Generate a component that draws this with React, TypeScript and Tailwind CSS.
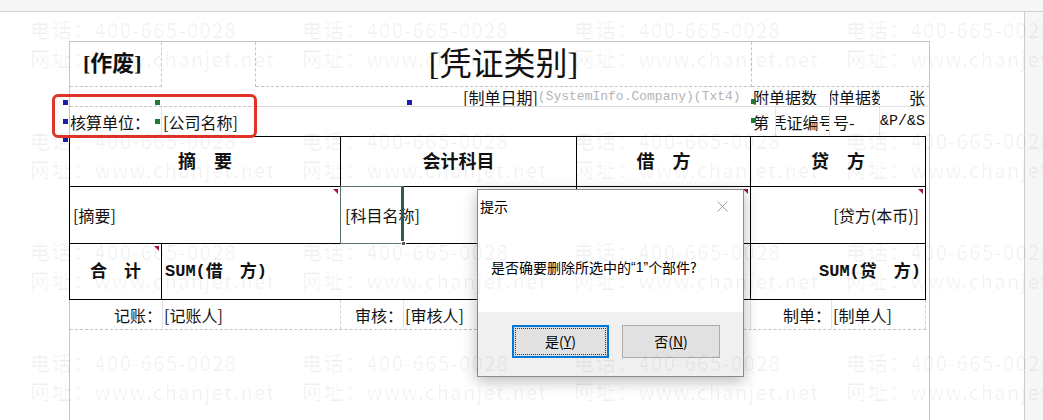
import React from "react";

const cjk = "font-['Noto_Sans_CJK_SC',sans-serif]";
const boldSerif = "font-['Liberation_Serif','Noto_Sans_CJK_SC',serif] font-bold";
const mono = "font-['Liberation_Mono','Noto_Sans_CJK_SC',monospace]";

// little red comment marker in a cell's top-right corner
const Marker = () => (
  <span className="absolute top-[2px] right-[2px] w-0 h-0 border-l-[5px] border-l-transparent border-t-[5px] border-t-[#a3144a]" />
);

const Handle = ({ className }: { className: string }) => (
  <span className={`absolute w-[5px] h-[5px] ${className}`} />
);

const Watermark = () => {
  const tiles = Array.from({ length: 16 });
  return (
    <div className="pointer-events-none absolute inset-0 pl-[30px] pt-[15px] grid grid-cols-[repeat(4,272px)] auto-rows-[111px]">
      {tiles.map((_, i) => (
        <div key={i} className={`${cjk} text-[20px] leading-[29px] tracking-[1.5px] text-black/[0.06] whitespace-nowrap`}>
          <div>电话：400-665-0028</div>
          <div>网址：www.chanjet.net</div>
        </div>
      ))}
    </div>
  );
};

const ConfirmDialog = () => (
  <div className={`absolute left-[477px] top-[189px] w-[267px] h-[188px] bg-white border border-[#8a8a8a] shadow-[0_4px_14px_rgba(0,0,0,0.28)] flex flex-col ${cjk} text-[14px] text-black`}>
    <div className="h-[32px] flex items-center justify-between pl-[2px] pr-[15px]">
      <span>提示</span>
      <svg width="11" height="11" viewBox="0 0 11 11" className="stroke-[#a0a0a0]" fill="none">
        <path d="M0.5 0.5l10 10M10.5 0.5l-10 10" strokeWidth="1" />
      </svg>
    </div>
    <div className="h-[90px] flex items-center pl-[13px]">
      是否确要删除所选中的<span className="font-['Liberation_Sans',sans-serif]">“1”</span>个部件?
    </div>
    <div className="flex-1 bg-[#f0f0f0] flex gap-[13px] pl-[34px] pt-[13px]">
      <button className="w-[97px] h-[33px] border-2 border-[#0078d7] bg-[#e1e1e1] p-[1px]">
        <span className="w-full h-full flex items-center justify-center border border-dotted border-[#333]">
          是(<span className="underline">Y</span>)
        </span>
      </button>
      <button className="w-[98px] h-[33px] border border-[#adadad] bg-[#e1e1e1] flex items-center justify-center">
        否(<span className="underline">N</span>)
      </button>
    </div>
  </div>
);

export default function App() {
  return (
    <div className={`relative w-[1043px] h-[420px] overflow-hidden bg-[#f6f6f6] ${cjk} text-[#111]`}>
      <div className="h-[12px] border-b border-[#d2d2d2]" />
      <div className="flex h-[408px]">
        <div className="w-[1025px] shrink-0 bg-white border-r border-[#cdcdcd] pt-[29px] pl-[69px]">
          <div className="relative w-[861px] h-full border-l border-t border-r border-[#c6c6c6] text-[16px] leading-none">
            {/* title band */}
            <div className="flex h-[45px]">
              <div className="w-[92px] border-r border-b border-dashed border-[#c4c4c4] flex items-center pl-[13px]">
                <span className={`${boldSerif} text-[22px]`}>[作废]</span>
              </div>
              <div className="w-[94px] border-r border-dashed border-[#c4c4c4]" />
              <div className="w-[496px] border-r border-b border-dashed border-[#c4c4c4] flex items-center justify-center">
                <span className="font-['Liberation_Serif','Noto_Sans_CJK_SC',serif] text-[32px]">[凭证类别]</span>
              </div>
              <div className="flex-1 border-b border-dashed border-[#c4c4c4]" />
            </div>

            {/* date / attachments */}
            <div className="flex h-[20px]">
              <div className="w-[186px] border-b border-dashed border-[#c4c4c4]" />
              <div className="w-[496px] border-b border-[#d8d8d8] flex items-center pl-[207px] overflow-hidden whitespace-nowrap relative">
                <span>[制单日期]</span>
                <span className={`${mono} text-[13px] text-[#b4b4b4]`}>(SystemInfo.Company)(Txt4)</span>
              </div>
              <div className="flex-1 flex items-center border-b border-[#e4e4e4]">
                <div className="w-[78px] pl-[1px] whitespace-nowrap overflow-hidden">附单据数</div>
                <div className="w-[50px] flex justify-center overflow-hidden whitespace-nowrap">附单据数</div>
                <div className="flex-1 text-right pr-[4px]">张</div>
              </div>
            </div>

            {/* accounting unit / voucher number */}
            <div className="flex h-[29px]">
              <div className="w-[92px] border-r border-[#e2e2e2] flex items-center whitespace-nowrap">核算单位：</div>
              <div className="w-[94px] flex items-center pl-[1px] whitespace-nowrap">[公司名称]</div>
              <div className="w-[496px]" />
              <div className="flex-1 flex items-center">
                <div className="w-[24px] h-full flex items-center pl-[1px] border-r border-[#e4e4e4]">第</div>
                <div className="w-[54px] h-full flex items-center justify-center overflow-hidden whitespace-nowrap border-r border-[#e4e4e4]">凭证编号</div>
                <div className="w-[50px] h-full flex items-center pl-[3px] whitespace-nowrap border-r border-[#e4e4e4]">号-</div>
                <div className={`flex-1 h-full flex items-center justify-end pr-[4px] ${mono} text-[15px]`}>&amp;P/&amp;S</div>
              </div>
            </div>

            {/* voucher grid */}
            <div className="-ml-px w-[857px] border-l border-t border-black">
              <div className={`flex h-[50px] border-b border-black ${boldSerif} text-[18px]`}>
                <div className="w-[271px] border-r border-black flex items-center justify-center">摘　要</div>
                <div className="w-[236px] border-r border-black flex items-center justify-center">会计科目</div>
                <div className="w-[174px] border-r border-black flex items-center justify-center">借　方</div>
                <div className="w-[175px] border-r border-black flex items-center justify-center">贷　方</div>
              </div>
              <div className="flex h-[57px] border-b border-black">
                <div className="relative w-[271px] border-r border-black flex items-center pl-[3px]">
                  [摘要]
                  <Marker />
                </div>
                <div className="relative w-[236px] border-r border-black flex items-center pl-[4px]">
                  [科目名称]
                  <span className="absolute -left-px -top-px w-[64px] h-[58px] border border-[#5d7469] border-r-[3px] border-r-[#2c5d4a]" />
                  <span className="absolute left-[60px] bottom-[-3px] w-[5px] h-[5px] bg-[#555] border border-white" />
                </div>
                <div className="relative w-[174px] border-r border-black">
                  <Marker />
                </div>
                <div className="relative w-[175px] border-r border-black flex items-center justify-end pr-[6px]">
                  [贷方(本币)]
                  <Marker />
                </div>
              </div>
              <div className={`flex h-[56px] border-b border-black ${boldSerif} text-[17px]`}>
                <div className="relative w-[92px] border-r border-black flex items-center justify-center">
                  合　计
                  <Marker />
                </div>
                <div className="w-[589px] border-r border-black flex items-center pl-[3px]">
                  <span className={`${mono} font-bold`}>SUM(</span>借　方<span className={`${mono} font-bold`}>)</span>
                </div>
                <div className="w-[175px] border-r border-black flex items-center justify-end pr-[4px]">
                  <span className={`${mono} font-bold`}>SUM(</span>贷　方<span className={`${mono} font-bold`}>)</span>
                </div>
              </div>
            </div>

            {/* signatures */}
            <div className="flex h-[30px] border-b border-dashed border-[#c4c4c4] w-[856px]">
              <div className="w-[93px] border-r border-[#e0e0e0] flex items-center justify-end whitespace-nowrap">记账：</div>
              <div className="w-[178px] border-r border-dashed border-[#d0d0d0] flex items-center pl-[1px]">[记账人]</div>
              <div className="w-[63px] border-r border-[#e0e0e0] flex items-center justify-end whitespace-nowrap">审核：</div>
              <div className="w-[173px] border-r border-[#e0e0e0] flex items-center pl-[1px]">[审核人]</div>
              <div className="w-[174px] border-r border-[#e0e0e0]" />
              <div className="w-[81px] border-r border-[#e0e0e0] flex items-center justify-end whitespace-nowrap">制单：</div>
              <div className="w-[94px] border-r border-dashed border-[#d0d0d0] flex items-center pl-[1px]">[制单人]</div>
            </div>
          </div>
        </div>
      </div>

      {/* selection handles on the picked controls */}
      <Handle className="left-[63px] top-[100px] bg-[#1c1cae]" />
      <Handle className="left-[63px] top-[119px] bg-[#1c1cae]" />
      <Handle className="left-[63px] top-[137px] bg-[#1c1cae]" />
      <Handle className="left-[155px] top-[100px] bg-[#1f7a34]" />
      <Handle className="left-[155px] top-[119px] bg-[#1f7a34]" />
      <Handle className="left-[407px] top-[100px] bg-[#1c1cae]" />
      <Handle className="left-[751px] top-[99px] bg-[#1f7a34]" />
      <Handle className="left-[751px] top-[118px] bg-[#1f7a34]" />

      {/* highlight around the unit field */}
      <div className="absolute left-[52px] top-[94px] w-[205px] h-[44px] border-[3px] border-[#e2332b] rounded-[6px]" />

      <ConfirmDialog />
      <Watermark />
    </div>
  );
}
